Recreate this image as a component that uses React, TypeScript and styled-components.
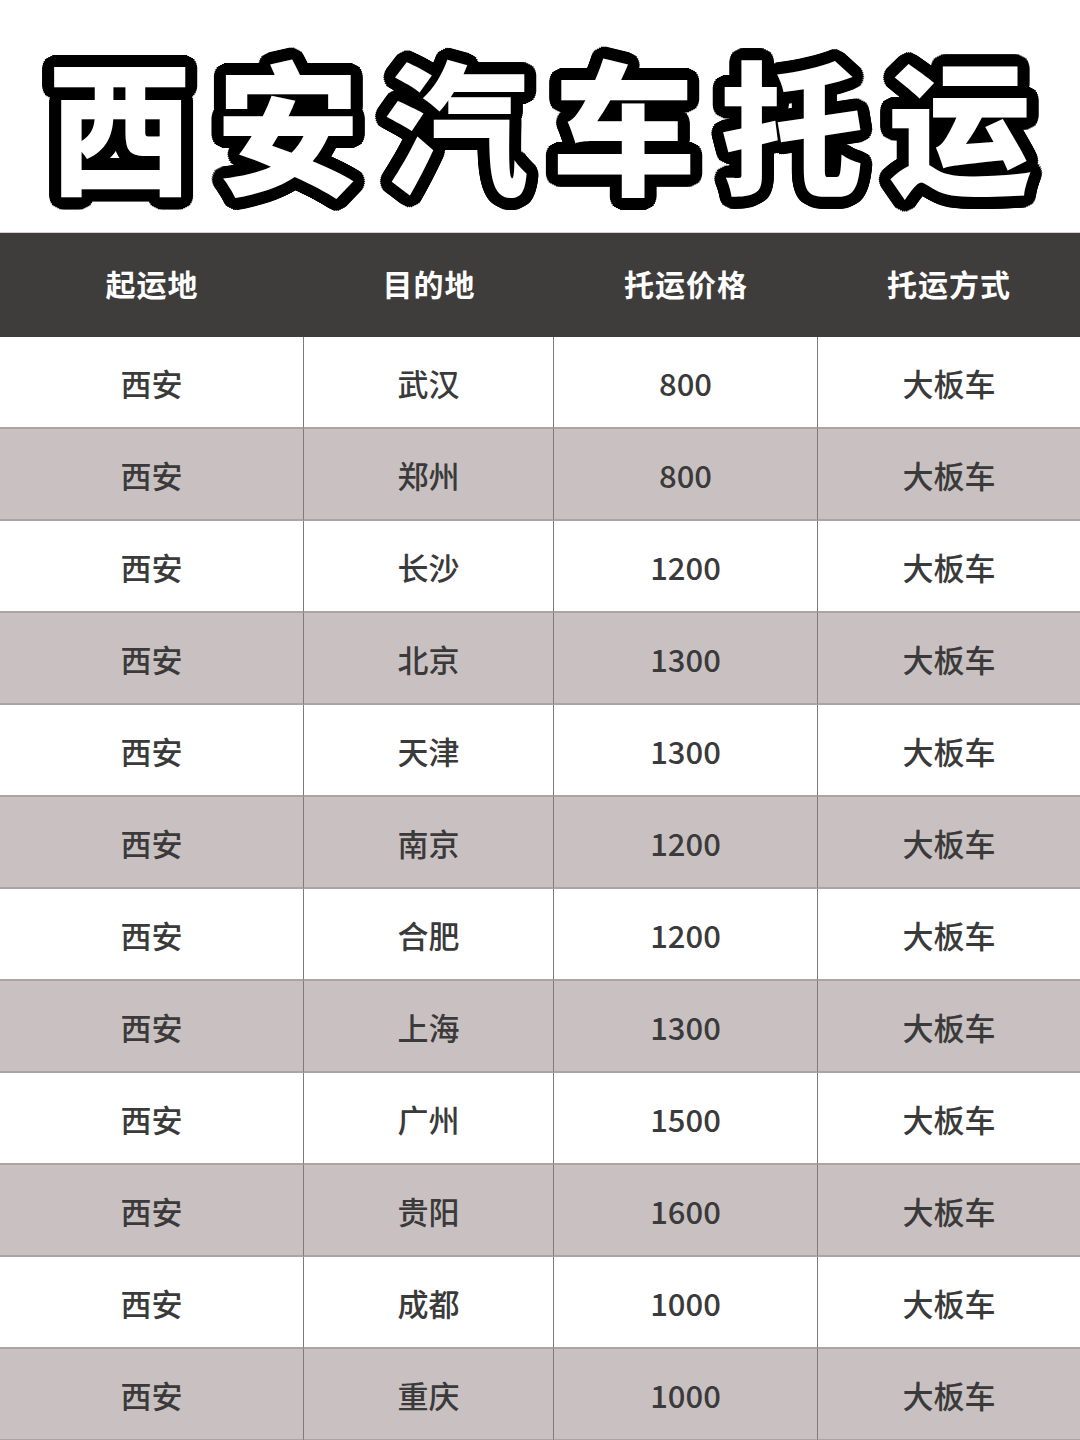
import React from 'react';
import styled, { createGlobalStyle } from 'styled-components';

const GlobalStyle = createGlobalStyle`
  html, body {
    margin: 0;
    padding: 0;
    background: #ffffff;
  }
  body {
    font-family: 'Noto Sans CJK SC', 'Noto Sans', sans-serif;
  }
`;

// rounded black outline round the title glyphs, built from rings of shadows
const outline = (() => {
  const parts: string[] = [];
  [4, 8, 12].forEach((r) => {
    const steps = r * 3;
    for (let i = 0; i < steps; i++) {
      const a = (i / steps) * Math.PI * 2;
      parts.push(`${(Math.cos(a) * r).toFixed(1)}px ${(Math.sin(a) * r).toFixed(1)}px 0 #000`);
    }
  });
  return parts.join(', ');
})();

const Page = styled.div`
  width: 1080px;
  height: 1440px;
  overflow: hidden;
  background: #ffffff;
`;

const TitleBar = styled.div`
  height: 232px;
  display: flex;
  align-items: center;
  justify-content: center;
`;

const Title = styled.h1`
  margin: 0 -24px 0 0;
  padding-top: 10px;
  font-family: 'Noto Sans CJK SC', sans-serif;
  font-weight: 800;
  font-size: 144px;
  line-height: 1;
  letter-spacing: 24px;
  color: #ffffff;
  text-shadow: ${outline};
`;

const Grid = styled.div`
  display: grid;
  grid-template-columns: 304px 250px 264px 1fr;
`;

const HeadCell = styled.div`
  height: 105px;
  background: #3f3d3b;
  border-top: 1px solid #d8cfcf;
  box-sizing: border-box;
  display: flex;
  align-items: center;
  justify-content: center;
  padding-bottom: 4px;
  color: #ffffff;
  font-size: 30px;
  font-weight: 700;
  letter-spacing: 1px;
`;

const Cell = styled.div<{ $shade: boolean; $last: boolean }>`
  height: 92px;
  box-sizing: border-box;
  display: flex;
  align-items: center;
  justify-content: center;
  background: ${(p) => (p.$shade ? '#c9c1c1' : '#ffffff')};
  border-bottom: 2px solid #aaa5a5;
  border-right: ${(p) => (p.$last ? 'none' : '1px solid #7d7b7b')};
  color: #3b3a3a;
  font-size: 31px;
  font-weight: 500;
`;

const HEADERS = ['起运地', '目的地', '托运价格', '托运方式'];

const ROUTES: [string, string][] = [
  ['武汉', '800'],
  ['郑州', '800'],
  ['长沙', '1200'],
  ['北京', '1300'],
  ['天津', '1300'],
  ['南京', '1200'],
  ['合肥', '1200'],
  ['上海', '1300'],
  ['广州', '1500'],
  ['贵阳', '1600'],
  ['成都', '1000'],
  ['重庆', '1000'],
];

const App = () => {
  return (
    <Page>
      <GlobalStyle />
      <TitleBar>
        <Title>西安汽车托运</Title>
      </TitleBar>
      <Grid>
        {HEADERS.map((h) => (
          <HeadCell key={h}>{h}</HeadCell>
        ))}
        {ROUTES.map(([city, price], i) => {
          const shade = i % 2 === 1;
          const cells = ['西安', city, price, '大板车'];
          return cells.map((text, j) => (
            <Cell key={`${i}-${j}`} $shade={shade} $last={j === 3}>
              {text}
            </Cell>
          ));
        })}
      </Grid>
    </Page>
  );
};

export default App;
